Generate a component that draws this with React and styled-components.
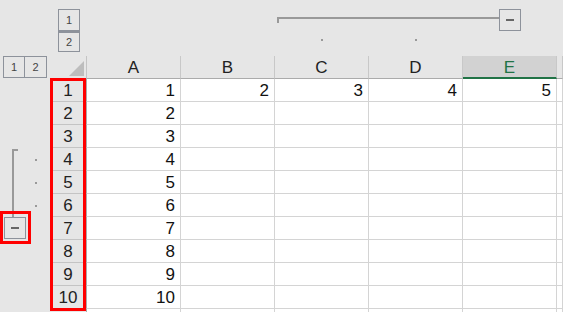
import React from "react";
import styled, { createGlobalStyle, css } from "styled-components";

const GlobalStyle = createGlobalStyle`
    html, body {
        margin: 0;
        padding: 0;
        background: #e6e6e6;
    }
    * {
        box-sizing: border-box;
    }
`;

const COLS = ["A", "B", "C", "D", "E", "F"];
const ROWS = [1, 2, 3, 4, 5, 6, 7, 8, 9, 10, 11];

// 1행의 값만 B~E 열에 들어있음
const firstRow = { A: 1, B: 2, C: 3, D: 4, E: 5 };

const Page = styled.div`
    position: relative;
    width: 563px;
    height: 312px;
    overflow: hidden;
    background: #e6e6e6;
    font-family: "Liberation Sans", Arial, sans-serif;
    display: grid;
    grid-template-columns: 50px 37px repeat(5, 94px) 6px;
    grid-template-rows: 56px 23px repeat(10, 23px) 4px;
`;

/* 아웃라인 레벨 버튼 */
const LevelStack = styled.div`
    display: flex;
    flex-direction: column;
    padding: 9px 0 0 8px;
`;

const LevelRow = styled.div`
    display: flex;
    padding: 0 0 0 3px;
    align-items: flex-start;
`;

const LevelButton = styled.div`
    width: 22px;
    height: 22px;
    border: 1px solid #8d929b;
    display: flex;
    align-items: center;
    justify-content: center;
    font-size: 11px;
    color: #444;
    ${(p) => p.$joinTop && css`
        border-top: 2px solid #8d929b;
        height: 21px;
    `}
    ${(p) => p.$joinLeft && css`
        border-left: none;
        width: 22px;
    `}
`;

/* 열 아웃라인 (위쪽) */
const ColOutline = styled.div`
    display: flex;
    flex-direction: column;
    align-items: center;
    padding-top: 9px;
`;

const Track = styled.div`
    width: 100%;
    height: 22px;
    display: flex;
    align-items: flex-start;
`;

const BracketStart = styled.div`
    flex: 1;
    height: 6px;
    margin: 8px 0 0 2px;
    border-top: 2px solid #999;
    border-left: 2px solid #999;
`;

const HLine = styled.div`
    height: 2px;
    margin-top: 8px;
    background: #999;
    ${(p) => (p.$width ? `width: ${p.$width}px;` : "flex: 1;")}
`;

const CollapseButton = styled.div`
    width: 22px;
    height: 22px;
    border: 1px solid #8d929b;
    display: flex;
    align-items: center;
    justify-content: center;
    flex-shrink: 0;

    &::after {
        content: "";
        width: 8px;
        height: 2px;
        background: #666;
    }
`;

const Dot = styled.div`
    width: 2px;
    height: 2px;
    background: #999;
    margin-top: ${(p) => p.$top || 0}px;
`;

/* 행 아웃라인 (왼쪽) */
const RowOutline = styled.div`
    display: grid;
    grid-template-columns: 30px 1fr;
    align-items: stretch;
`;

const LineSlot = styled.div`
    display: flex;
    align-items: stretch;
`;

const VTick = styled.div`
    margin: 1px 0 0 12px;
    width: 6px;
    border-top: 2px solid #999;
    border-left: 2px solid #999;
`;

const VLine = styled.div`
    margin-left: 12px;
    width: 2px;
    background: #999;
`;

const RowCollapse = styled(CollapseButton)`
    margin-left: 4px;
`;

const DotSlot = styled.div`
    display: flex;
    align-items: center;
    padding-left: 5px;
`;

/* 시트 헤더 */
const Corner = styled.div`
    background: #e6e6e6;
    border-right: 1px solid #c4c4c4;
    border-bottom: 1px solid #ababab;
    display: flex;
    align-items: flex-end;
    justify-content: flex-end;
    padding: 0 2px 2px 0;

    &::after {
        content: "";
        width: 0;
        height: 0;
        border-left: 15px solid transparent;
        border-bottom: 15px solid #bdbdbd;
    }
`;

const ColHeader = styled.div`
    background: #e6e6e6;
    border-right: 1px solid #c8c8c8;
    border-bottom: 1px solid #ababab;
    display: flex;
    align-items: center;
    justify-content: center;
    font-size: 17px;
    color: #222;
    padding-top: 1px;
    ${(p) => p.$selected && css`
        background: #d2d2d2;
        color: #217346;
        border-bottom: 2px solid #217346;
        padding-top: 2px;
    `}
`;

const RowHeader = styled.div`
    background: #e6e6e6;
    border-right: 1px solid #ababab;
    border-bottom: 1px solid #c4c4c4;
    display: flex;
    align-items: center;
    justify-content: center;
    font-size: 17px;
    color: #222;
    padding-top: 1px;
`;

const Cell = styled.div`
    background: #ffffff;
    border-right: 1px solid #d4d4d4;
    border-bottom: 1px solid #d4d4d4;
    display: flex;
    align-items: center;
    justify-content: flex-end;
    padding: 1px 5px 0 0;
    font-size: 17px;
    color: #111;
`;

/* 빨간 강조 표시 */
const Highlight = styled.div`
    position: absolute;
    border: 3px solid #ff0000;
    pointer-events: none;
`;

const colOutline = {
    C: "start",
    D: "mid",
    E: "end",
};

const rowOutline = {
    4: "start",
    5: "mid",
    6: "mid",
    7: "collapse",
};

const renderColOutline = (col) => {
    const kind = colOutline[col];
    return (
        <ColOutline key={`o-${col}`}>
            <Track>
                {kind === "start" && <BracketStart />}
                {kind === "mid" && <HLine />}
                {kind === "end" && (
                    <>
                        <HLine $width={36} />
                        <CollapseButton />
                    </>
                )}
            </Track>
            {(kind === "start" || kind === "mid") && <Dot $top={8} />}
        </ColOutline>
    );
};

const renderRowOutline = (row) => {
    const kind = rowOutline[row];
    return (
        <RowOutline key={`ro-${row}`}>
            <LineSlot>
                {kind === "start" && <VTick />}
                {kind === "mid" && <VLine />}
                {kind === "collapse" && <RowCollapse />}
            </LineSlot>
            <DotSlot>{(kind === "start" || kind === "mid") && <Dot />}</DotSlot>
        </RowOutline>
    );
};

const cellValue = (row, col) => {
    if (row === 1) return firstRow[col] ?? "";
    if (col === "A" && row <= 10) return row;
    return "";
};

// 화면 밖으로 잘리는 F열 / 11행은 라벨 없이 테두리만
const visibleCol = (c) => (c === "F" ? "" : c);
const visibleRow = (r) => (r > 10 ? "" : r);

const App = () => {
    return (
        <>
            <GlobalStyle />
            <Page>
                <div />
                <LevelStack>
                    <LevelButton>1</LevelButton>
                    <LevelButton $joinTop>2</LevelButton>
                </LevelStack>
                {COLS.map(renderColOutline)}

                <LevelRow>
                    <LevelButton>1</LevelButton>
                    <LevelButton $joinLeft>2</LevelButton>
                </LevelRow>
                <Corner />
                {COLS.map((c) => (
                    <ColHeader key={c} $selected={c === "E"}>
                        {visibleCol(c)}
                    </ColHeader>
                ))}

                {ROWS.map((r) => (
                    <React.Fragment key={r}>
                        {renderRowOutline(r)}
                        <RowHeader>{visibleRow(r)}</RowHeader>
                        {COLS.map((c) => (
                            <Cell key={c}>{cellValue(r, c)}</Cell>
                        ))}
                    </React.Fragment>
                ))}

                <Highlight style={{ left: 50, top: 78, width: 36, height: 233 }} />
                <Highlight style={{ left: 0, top: 211, width: 31, height: 33 }} />
            </Page>
        </>
    );
};

export default App;
